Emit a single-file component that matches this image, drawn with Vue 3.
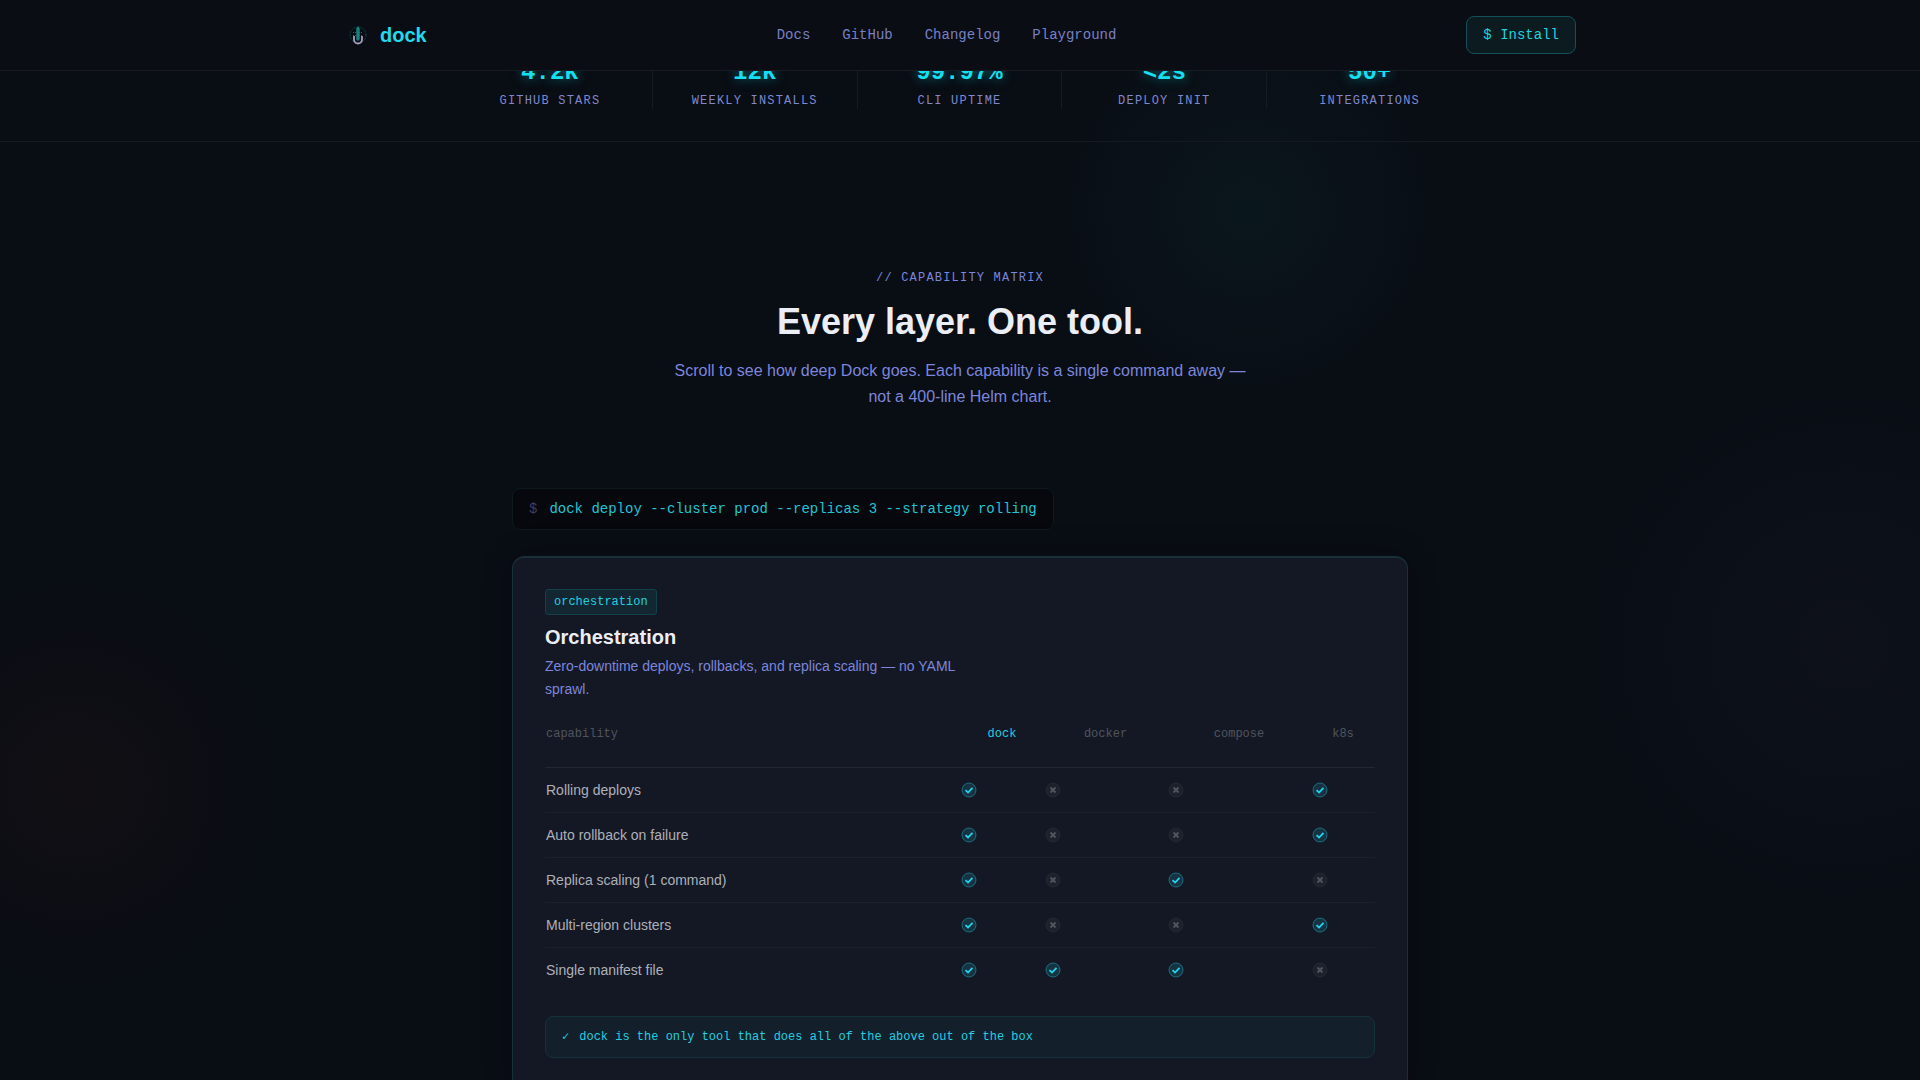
<script setup>
const links = ['Docs', 'GitHub', 'Changelog', 'Playground']

const stats = [
  { value: '4.2k', label: 'GitHub stars' },
  { value: '12k', label: 'Weekly installs' },
  { value: '99.97%', label: 'CLI uptime' },
  { value: '<2s', label: 'Deploy init' },
  { value: '50+', label: 'Integrations' },
]

const tools = ['dock', 'docker', 'compose', 'k8s']

const rows = [
  { name: 'Rolling deploys', support: [true, false, false, true] },
  { name: 'Auto rollback on failure', support: [true, false, false, true] },
  { name: 'Replica scaling (1 command)', support: [true, false, true, false] },
  { name: 'Multi-region clusters', support: [true, false, false, true] },
  { name: 'Single manifest file', support: [true, true, true, false] },
]
</script>

<template>
  <div class="page">
    <header class="nav">
      <div class="nav-inner">
        <a class="brand" href="#">
          <svg class="brand-mark" viewBox="0 0 28 28" aria-hidden="true">
            <circle cx="14" cy="14" r="8" fill="none" stroke="#0f766e" stroke-opacity="0.5" stroke-dasharray="2 1" />
            <path d="M9 11.500h10M9 14.500h10" stroke="#8b7fa8" stroke-opacity="0.6" stroke-dasharray="1 1" />
            <path d="M10 15v3.500a4 4 0 0 0 8 0V15" fill="none" stroke="#a99bbd" stroke-width="1.8" />
            <path d="M14 5l1.700 2.500V18a1.700 1.700 0 0 1-3.400 0V7.500z" fill="#12857e" />
          </svg>
          <span>dock</span>
        </a>
        <nav class="links" aria-label="Main">
          <a v-for="link in links" :key="link" href="#">{{ link }}</a>
        </nav>
        <button class="install" type="button">$ Install</button>
      </div>
    </header>

    <main>
      <section class="stats" aria-label="Statistics">
        <div class="stats-inner">
          <div v-for="stat in stats" :key="stat.label" class="stat">
            <strong>{{ stat.value }}</strong>
            <span>{{ stat.label }}</span>
          </div>
        </div>
      </section>

      <section class="matrix">
        <div class="intro">
          <p class="eyebrow">// Capability matrix</p>
          <h2>Every layer. One tool.</h2>
          <p class="lead">
            Scroll to see how deep Dock goes. Each capability is a single command away — not a 400-line Helm chart.
          </p>
        </div>

        <div class="panel">
          <div class="command">
            <span class="prompt">$</span>
            <code>dock deploy --cluster prod --replicas 3 --strategy rolling</code>
          </div>

          <article class="card">
            <span class="tag">orchestration</span>
            <h3>Orchestration</h3>
            <p class="summary">Zero-downtime deploys, rollbacks, and replica scaling — no YAML sprawl.</p>

            <table>
              <colgroup>
                <col />
                <col class="col-dock" />
                <col class="col-docker" />
                <col class="col-compose" />
                <col class="col-k8s" />
              </colgroup>
              <thead>
                <tr>
                  <th class="first" scope="col">capability</th>
                  <th v-for="tool in tools" :key="tool" :class="{ own: tool === 'dock' }" scope="col">{{ tool }}</th>
                </tr>
              </thead>
              <tbody>
                <tr v-for="row in rows" :key="row.name">
                  <td>{{ row.name }}</td>
                  <td v-for="(ok, i) in row.support" :key="tools[i]">
                    <svg v-if="ok" class="mark" viewBox="0 0 16 16" role="img" aria-label="Yes">
                      <circle cx="8" cy="8" r="7" fill="#22d3ee" fill-opacity="0.15" stroke="#22d3ee" stroke-opacity="0.4" />
                      <path d="M4.5 8.2 7 10.5 11.5 5.8" fill="none" stroke="#22d3ee" stroke-width="1.8" />
                    </svg>
                    <svg v-else class="mark" viewBox="0 0 16 16" role="img" aria-label="No">
                      <circle cx="8" cy="8" r="7" fill="#fff" fill-opacity="0.04" stroke="#fff" stroke-opacity="0.05" />
                      <path d="M5.5 5.5l5 5M10.5 5.5l-5 5" stroke="#fff" stroke-opacity="0.24" stroke-width="1.8" />
                    </svg>
                  </td>
                </tr>
              </tbody>
            </table>

            <p class="verdict"><span>✓</span><span>dock is the only tool that does all of the above out of the box</span></p>
          </article>
        </div>
      </section>
    </main>
  </div>
</template>

<style>
body {
  margin: 0;
  background: #090d14;
}
</style>

<style scoped>
.page {
  min-height: 100vh;
  color: #eceef5;
  font-family: "Liberation Sans", Arial, sans-serif;
  background:
    radial-gradient(circle at 65% 210px, rgba(20, 150, 130, 0.07), transparent 210px),
    radial-gradient(circle at 96% 645px, rgba(70, 70, 100, 0.08), transparent 260px),
    radial-gradient(circle at 4% 785px, rgba(120, 40, 20, 0.07), transparent 210px),
    #090d14;
}

p,
h2,
h3 {
  margin: 0;
}

a {
  text-decoration: none;
}

.nav {
  position: fixed;
  top: 0;
  left: 0;
  right: 0;
  z-index: 10;
  background: #0a0d14;
  border-bottom: 1px solid #171c22;
}

.nav-inner {
  display: flex;
  align-items: center;
  justify-content: space-between;
  box-sizing: border-box;
  max-width: 1280px;
  height: 70px;
  margin: 0 auto;
  padding: 0 24px;
}

.brand {
  display: flex;
  align-items: center;
  gap: 8px;
  color: #22d9ee;
  font-size: 20px;
  line-height: 28px;
  font-weight: 700;
}

.brand-mark {
  width: 28px;
  height: 28px;
}

.links {
  display: flex;
  gap: 32px;
}

.links a {
  color: #7880c4;
  font: 14px/20px "Liberation Mono", monospace;
}

.install {
  padding: 8px 16px;
  border: 1px solid #13505a;
  border-radius: 8px;
  background: #0b1b20;
  color: #22d3de;
  font: 14px/20px "Liberation Mono", monospace;
}

.stats {
  padding: 57px 0 32px;
  border-bottom: 1px solid #151a20;
}

.stats-inner {
  display: grid;
  grid-template-columns: repeat(5, 1fr);
  max-width: 1024px;
  margin: 0 auto;
}

.stat {
  display: flex;
  flex-direction: column;
  align-items: center;
  gap: 4px;
  border-right: 1px solid #161a21;
  font-family: "Liberation Mono", monospace;
}

.stat:last-child {
  border-right: 0;
}

.stat strong {
  color: #14e0f2;
  font-size: 24px;
  line-height: 32px;
  text-shadow: 0 0 12px rgba(20, 224, 242, 0.5);
}

.stat span {
  color: #8088cc;
  font-size: 12px;
  line-height: 16px;
  letter-spacing: 0.1em;
  text-transform: uppercase;
}

.matrix {
  padding: 128px 24px;
}

.intro {
  display: flex;
  flex-direction: column;
  align-items: center;
  gap: 16px;
  margin-bottom: 78px;
  text-align: center;
}

.eyebrow {
  color: #7c86dc;
  font: 12px/16px "Liberation Mono", monospace;
  letter-spacing: 0.1em;
  text-transform: uppercase;
}

h2 {
  font-size: 36px;
  line-height: 40px;
}

.lead {
  max-width: 576px;
  color: #7c86dc;
  font-size: 16px;
  line-height: 26px;
}

.panel {
  max-width: 896px;
  margin: 0 auto;
}

.command {
  display: flex;
  gap: 12px;
  box-sizing: border-box;
  width: fit-content;
  margin-bottom: 26px;
  padding: 10px 16px;
  border: 1px solid #0c1a20;
  border-radius: 8px;
  background: #07080d;
  color: #20c5d4;
  font: 14px/20px "Liberation Mono", monospace;
}

.command code {
  font: inherit;
}

.prompt {
  color: #3f3c66;
}

.card {
  padding: 32px;
  border: 1px solid #17313a;
  border-radius: 12px;
  background: #141824;
  box-shadow:
    inset 0 1px 0 #1a2f38,
    0 0 32px rgba(0, 0, 0, 0.2);
}

.tag {
  display: block;
  width: fit-content;
  margin-bottom: 8px;
  padding: 4px 8px;
  border: 1px solid #14404b;
  border-radius: 3px;
  background: #122732;
  color: #22cfe0;
  font: 12px/16px "Liberation Mono", monospace;
}

h3 {
  font-size: 20px;
  line-height: 28px;
}

.summary {
  max-width: 448px;
  margin: 4px 0 25px;
  color: #7c86dc;
  font-size: 14px;
  line-height: 23px;
}

table {
  width: 100%;
  table-layout: fixed;
  border-collapse: collapse;
}

.col-dock {
  width: 84px;
}

.col-docker {
  width: 123px;
}

.col-compose {
  width: 144px;
}

.col-k8s {
  width: 64px;
}

th {
  padding: 0 1px 25px;
  border-bottom: 1px solid #222732;
  color: #50545e;
  font: 12px/16px "Liberation Mono", monospace;
}

.first {
  text-align: left;
}

.own {
  color: #22cfe0;
}

td {
  height: 44px;
  padding: 0 1px;
  border-bottom: 1px solid #1b202b;
  color: #adb0b9;
  font-size: 14px;
  line-height: 20px;
}

tbody tr:last-child td {
  border-bottom: 0;
}

.mark {
  display: block;
  width: 16px;
  height: 16px;
}

.verdict {
  display: flex;
  gap: 10px;
  margin-top: 24px;
  padding: 12px 16px;
  border: 1px solid #15323a;
  border-radius: 8px;
  background: #131f2b;
  color: #22cfe0;
  font: 12px/16px "Liberation Mono", monospace;
}
</style>
